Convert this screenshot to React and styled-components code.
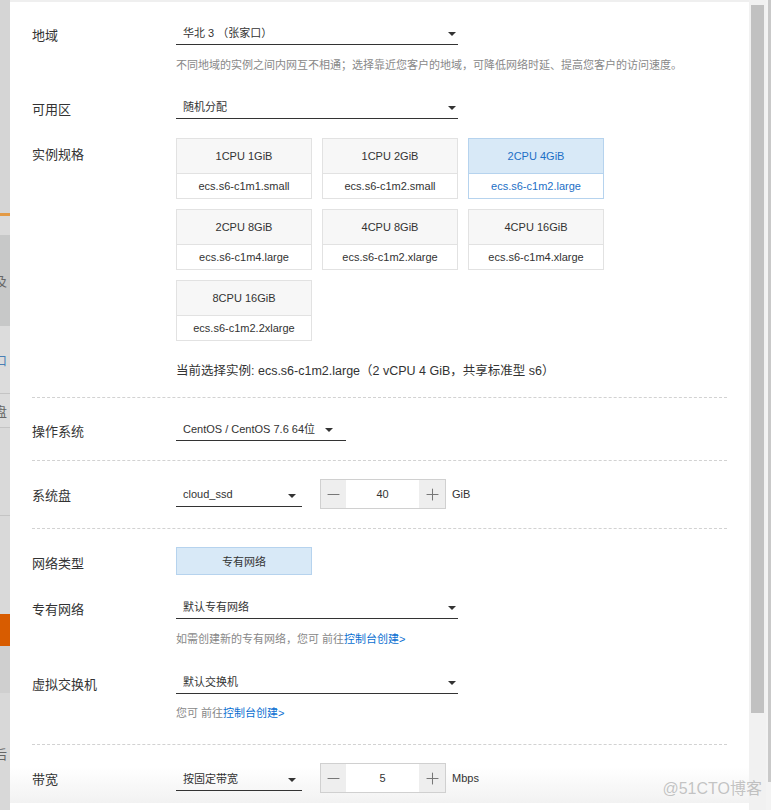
import React from 'react';
import styled, { createGlobalStyle } from 'styled-components';
import { Minus, Plus } from 'lucide-react';

const GlobalStyle = createGlobalStyle`
  html, body {
    margin: 0;
    padding: 0;
    background: #fff;
  }
  body {
    font-family: "Liberation Sans", "Noto Sans CJK SC", sans-serif;
    color: #333;
  }
`;

const backdrop = [
  { h: 213, bg: '#d5d5d5' },
  { h: 3, bg: '#e39a45' },
  { h: 19, bg: '#dadada' },
  { h: 91, bg: '#c7c8c8', ch: '及' },
  { h: 67, bg: '#dcdcdc', ch: '口', blue: true },
  { h: 33, bg: '#dcdcdc', ch: '盘', line: true },
  { h: 87, bg: '#d9d9d9', line: true },
  { h: 98, bg: '#d9d9d9', line: true },
  { h: 32, bg: '#d85c00' },
  { h: 47, bg: '#cfcfcf' },
  { h: 120, bg: '#d8d8d8', ch: '后' },
];

const specs = [
  { cpu: '1CPU 1GiB', name: 'ecs.s6-c1m1.small' },
  { cpu: '1CPU 2GiB', name: 'ecs.s6-c1m2.small' },
  { cpu: '2CPU 4GiB', name: 'ecs.s6-c1m2.large', active: true },
  { cpu: '2CPU 8GiB', name: 'ecs.s6-c1m4.large' },
  { cpu: '4CPU 8GiB', name: 'ecs.s6-c1m2.xlarge' },
  { cpu: '4CPU 16GiB', name: 'ecs.s6-c1m4.xlarge' },
  { cpu: '8CPU 16GiB', name: 'ecs.s6-c1m2.2xlarge' },
];

const Select = ({ value, width = 282, pr = 2 }) => (
  <SelectBox $width={width} $pr={pr}>
    <span>{value}</span>
    <Caret />
  </SelectBox>
);

const Stepper = ({ value, unit }) => (
  <StepperWrap>
    <StepperBox>
      <StepBtn>
        <Minus size={19} strokeWidth={1.3} color="#777" />
      </StepBtn>
      <StepInput>{value}</StepInput>
      <StepBtn $right>
        <Plus size={19} strokeWidth={1.3} color="#777" />
      </StepBtn>
    </StepperBox>
    <Unit>{unit}</Unit>
  </StepperWrap>
);

const App = () => {
  return (
    <>
      <GlobalStyle />
      <Screen>
        <Backdrop>
          {backdrop.map((b, i) => (
            <BackCell key={i} $h={b.h} $bg={b.bg} $line={b.line} $blue={b.blue}>
              {b.ch && <span>{b.ch}</span>}
            </BackCell>
          ))}
        </Backdrop>

        <Panel>
          <TopEdge />
          <Body>
            <Row $mt={0}>
              <Label>地域</Label>
              <Control>
                <Select value="华北 3 （张家口）" />
                <Hint $mt={11}>
                  不同地域的实例之间内网互不相通；选择靠近您客户的地域，可降低网络时延、提高您客户的访问速度。
                </Hint>
              </Control>
            </Row>

            <Row $mt={19}>
              <Label>可用区</Label>
              <Control>
                <Select value="随机分配" />
              </Control>
            </Row>

            <Row $mt={19}>
              <Label>实例规格</Label>
              <Control>
                <SpecGrid>
                  {specs.map((s) => (
                    <SpecCard key={s.name} $active={s.active}>
                      <SpecTop $active={s.active}>{s.cpu}</SpecTop>
                      <SpecBottom $active={s.active}>{s.name}</SpecBottom>
                    </SpecCard>
                  ))}
                </SpecGrid>
                <Current>
                  当前选择实例: ecs.s6-c1m2.large（2 vCPU 4 GiB，共享标准型 s6）
                </Current>
              </Control>
            </Row>

            <Divider $mt={16} />

            <Row $mt={17}>
              <Label>操作系统</Label>
              <Control>
                <Select value="CentOS / CentOS 7.6 64位" width={170} pr={13} />
              </Control>
            </Row>

            <Divider $mt={19} />

            <Row $mt={18}>
              <Label>系统盘</Label>
              <Inline>
                <Select value="cloud_ssd" width={126} pr={6} />
                <Stepper value="40" unit="GiB" />
              </Inline>
            </Row>

            <Divider $mt={19} />

            <Row $mt={18}>
              <Label>网络类型</Label>
              <Control>
                <TypeButton>专有网络</TypeButton>
              </Control>
            </Row>

            <Row $mt={18}>
              <Label>专有网络</Label>
              <Control>
                <Select value="默认专有网络" />
                <Hint $mt={11}>
                  如需创建新的专有网络，您可 前往<Link>控制台创建&gt;</Link>
                </Hint>
              </Control>
            </Row>

            <Row $mt={20}>
              <Label>虚拟交换机</Label>
              <Control>
                <Select value="默认交换机" />
                <Hint $mt={10}>
                  您可 前往<Link>控制台创建&gt;</Link>
                </Hint>
              </Control>
            </Row>

            <Divider $mt={22} />

            <Row $mt={18}>
              <Label>带宽</Label>
              <Inline>
                <Select value="按固定带宽" width={126} pr={6} />
                <Stepper value="5" unit="Mbps" />
              </Inline>
            </Row>
          </Body>
          <BottomEdge />
        </Panel>

        <ScrollTrack>
          <ScrollThumb />
        </ScrollTrack>
        <OuterTrack>
          <OuterThumb />
        </OuterTrack>

        <Watermark>@51CTO博客</Watermark>
      </Screen>
    </>
  );
};

const Screen = styled.div`
  position: relative;
  width: 771px;
  height: 810px;
  display: flex;
  overflow: hidden;
`;

const Backdrop = styled.div`
  width: 10px;
  flex: none;
  display: flex;
  flex-direction: column;
  overflow: hidden;
`;

const BackCell = styled.div`
  height: ${(p) => p.$h}px;
  flex: none;
  background: ${(p) => p.$bg};
  border-top: ${(p) => (p.$line ? '1px solid #c4c4c4' : 'none')};
  display: flex;
  align-items: center;
  overflow: hidden;

  span {
    margin-left: -6px;
    font-size: 13px;
    color: ${(p) => (p.$blue ? '#4a7fb5' : '#666')};
    font-family: "Noto Sans CJK SC", sans-serif;
    white-space: nowrap;
  }
`;

const Panel = styled.div`
  width: 739px;
  flex: none;
  display: flex;
  flex-direction: column;
`;

const TopEdge = styled.div`
  height: 2px;
  background: #efefef;
`;

const Body = styled.div`
  flex: 1;
  padding: 17px 22px 0;
  background: linear-gradient(180deg, #fff 0, #fff calc(100% - 36px), #f2f2f2 100%);
`;

const BottomEdge = styled.div`
  height: 7px;
  background: #fff;
`;

const Row = styled.div`
  display: grid;
  grid-template-columns: 144px 1fr;
  align-items: start;
  margin-top: ${(p) => p.$mt}px;
`;

const Label = styled.div`
  padding-top: 8px;
  font-size: 13px;
  line-height: 18px;
  color: #333;
`;

const Control = styled.div`
  display: flex;
  flex-direction: column;
  align-items: flex-start;
`;

const Inline = styled.div`
  display: flex;
  align-items: center;
  gap: 18px;
`;

const SelectBox = styled.div`
  box-sizing: border-box;
  width: ${(p) => p.$width}px;
  height: 26px;
  padding: 0 ${(p) => p.$pr}px 0 7px;
  display: flex;
  align-items: center;
  justify-content: space-between;
  border-bottom: 1px solid #333;
  font-size: 11px;
  color: #333;
  white-space: nowrap;
`;

const Caret = styled.i`
  width: 0;
  height: 0;
  margin-top: 4px;
  border-left: 4px solid transparent;
  border-right: 4px solid transparent;
  border-top: 4px solid #333;
`;

const Hint = styled.div`
  margin-top: ${(p) => p.$mt}px;
  font-size: 11px;
  line-height: 18px;
  color: #888;
  white-space: nowrap;
`;

const Link = styled.span`
  color: #0a6fd1;
`;

const SpecGrid = styled.div`
  display: grid;
  grid-template-columns: repeat(3, 136px);
  gap: 10px;
`;

const SpecCard = styled.div`
  box-sizing: border-box;
  height: 61px;
  border: 1px solid ${(p) => (p.$active ? '#b6d3ee' : '#e2e2e2')};
  display: flex;
  flex-direction: column;
  font-size: 11px;
  text-align: center;
`;

const SpecTop = styled.div`
  height: 34px;
  line-height: 34px;
  background: ${(p) => (p.$active ? '#d8e9f7' : '#f7f7f7')};
  border-bottom: 1px solid ${(p) => (p.$active ? '#b6d3ee' : '#e2e2e2')};
  color: ${(p) => (p.$active ? '#1d6fc6' : '#333')};
`;

const SpecBottom = styled.div`
  flex: 1;
  line-height: 24px;
  background: #fff;
  color: ${(p) => (p.$active ? '#1d6fc6' : '#333')};
`;

const Current = styled.div`
  margin-top: 20px;
  font-size: 12.5px;
  line-height: 20px;
  color: #333;
  white-space: nowrap;
`;

const Divider = styled.div`
  margin-top: ${(p) => p.$mt}px;
  border-top: 1px dashed #d2d2d2;
`;

const StepperWrap = styled.div`
  display: flex;
  align-items: center;
`;

const StepperBox = styled.div`
  box-sizing: border-box;
  width: 126px;
  height: 30px;
  display: flex;
  border: 1px solid #d0d0d0;
`;

const StepBtn = styled.div`
  width: ${(p) => (p.$right ? 26 : 25)}px;
  display: flex;
  align-items: center;
  justify-content: center;
  background: #eeeeee;
`;

const StepInput = styled.div`
  flex: 1;
  display: flex;
  align-items: center;
  justify-content: center;
  background: #fff;
  font-size: 11px;
  color: #333;
`;

const Unit = styled.span`
  margin-left: 6px;
  font-size: 11px;
  color: #333;
`;

const TypeButton = styled.div`
  box-sizing: border-box;
  width: 136px;
  height: 28px;
  display: flex;
  align-items: center;
  justify-content: center;
  background: #d8e9f7;
  border: 1px solid #b6d3ee;
  font-size: 11px;
  color: #333;
`;

const ScrollTrack = styled.div`
  width: 17px;
  flex: none;
  box-sizing: border-box;
  padding: 5px 2px 0;
  background: #f1f1f1;
`;

const ScrollThumb = styled.div`
  height: 708px;
  background: #c1c1c1;
`;

const OuterTrack = styled.div`
  width: 5px;
  flex: none;
  display: flex;
  justify-content: flex-end;
  background: #f3f3f3;
`;

const OuterThumb = styled.div`
  width: 3px;
  height: 782px;
  background: #c9c9c9;
`;

const Watermark = styled.div`
  position: absolute;
  right: 9px;
  bottom: 11px;
  font-size: 16px;
  line-height: 20px;
  color: rgba(150, 150, 150, 0.55);
  white-space: nowrap;
`;

export default App;
